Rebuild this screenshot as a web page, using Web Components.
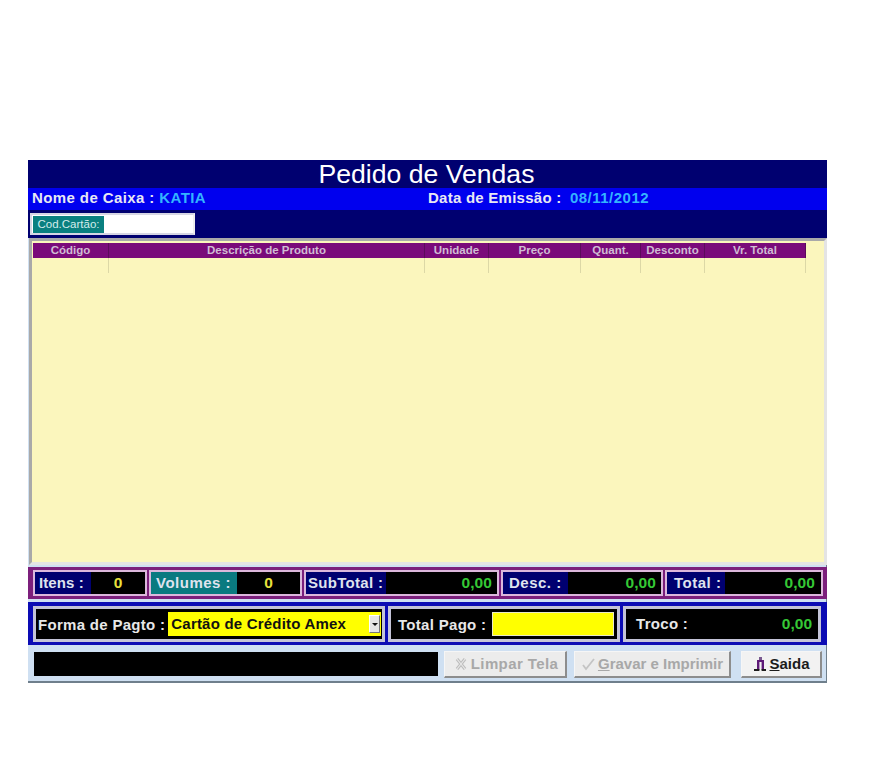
<!DOCTYPE html>
<html>
<head>
<meta charset="utf-8">
<title>Pedido de Vendas</title>
<style>
  html, body { margin: 0; background: #fff; }
  body { padding: 160px 0 0 28px; font-family: "Liberation Sans", Arial, sans-serif; }
</style>
</head>
<body>
<pedido-app></pedido-app>

<script>
class PedidoHeader extends HTMLElement {
  constructor() {
    super();
    this.attachShadow({ mode: 'open' });
    this.shadowRoot.innerHTML = `
      <style>
        :host { display: block; background: #000070; height: 78px; }
        .title { height: 28px; display: flex; justify-content: center; align-items: center;
          color: #fff; font-size: 26.6px; line-height: 28px; padding-right: 2px; box-sizing: border-box; }
        .info { height: 22px; background: #0000ee; display: grid; grid-template-columns: 399px 1fr;
          align-items: center; font-weight: bold; font-size: 15px; line-height: 20px; color: #e8e8f4; letter-spacing: .4px; }
        .info > div { padding-left: 4px; padding-bottom: 2px; white-space: nowrap; }
        .info > div + div { padding-left: 1px; letter-spacing: .25px; }
        .val { color: #33b4ff; letter-spacing: .4px; }
        .date { margin-left: 4px; letter-spacing: .5px; }
        .card { height: 28px; display: flex; align-items: center; padding-left: 2px; }
        .field { display: flex; height: 22px; border: 2px solid #d6d6e4; border-right-color: #eee;
          box-sizing: border-box; width: 165px; background: #fff; padding: 1px 0 0 1px; }
        .lab { width: 71px; background: #0a8080; color: #d4ecec; font-size: 11.5px; display: flex; align-items: center;
          justify-content: center; padding-bottom: 1px; box-sizing: border-box; }
      </style>
      <div class="title">Pedido de Vendas</div>
      <div class="info">
        <div>Nome de Caixa : <span class="val">KATIA</span></div>
        <div>Data de Emissão :&nbsp;<span class="val date">08/11/2012</span></div>
      </div>
      <div class="card">
        <div class="field"><div class="lab">Cod.Cartão:</div></div>
      </div>
    `;
  }
}

class PedidoGrid extends HTMLElement {
  constructor() {
    super();
    this.attachShadow({ mode: 'open' });
    const cols = [
      ['Código', 76], ['Descrição de Produto', 316], ['Unidade', 64], ['Preço', 92],
      ['Quant.', 60], ['Desconto', 64], ['Vr. Total', 101],
    ];
    const head = cols.map(c => `<div class="th" style="width:${c[1]}px">${c[0]}</div>`).join('');
    const row = cols.map(c => `<div class="td" style="width:${c[1]}px"></div>`).join('');
    this.shadowRoot.innerHTML = `
      <style>
        :host { display: block; height: 327px; box-sizing: border-box; background: #fbf6bd;
          border: 3px solid #a9a9a9; border-right-color: #e4e4e4; border-bottom-color: #e4e4e4;
          padding: 2px 0 0 1px; margin-left: 1px; width: 798px; }
        .r { display: flex; }
        .th { height: 15px; box-sizing: border-box; background: #7a0a7a; color: #d0bcd4; font-size: 11.5px; font-weight: bold;
          display: flex; align-items: center; justify-content: center; border-right: 1px solid #5b0a5b; padding-bottom: 1px; }
        .td { height: 15px; box-sizing: border-box; border-right: 1px solid #dcd8a6; }
      </style>
      <div class="r">${head}</div>
      <div class="r">${row}</div>
    `;
  }
}

class PedidoStat extends HTMLElement {
  constructor() {
    super();
    this.attachShadow({ mode: 'open' });
  }
  connectedCallback() {
    const lw = this.getAttribute('label-width');
    const pad = this.getAttribute('label-pad') || '4';
    const spacing = this.getAttribute('label-spacing') || '.5';
    const bg = this.getAttribute('label-bg') || '#000070';
    const color = this.getAttribute('value-color') || '#35c835';
    const align = this.getAttribute('value-align') || 'right';
    const vpad = this.getAttribute('value-pad') || '5';
    this.shadowRoot.innerHTML = `
      <style>
        :host { display: flex; height: 26px; box-sizing: border-box; border: 2px solid #dcb8dc; background: #000;
          font-weight: bold; font-size: 15px; letter-spacing: ${spacing}px; }
        .l { width: ${lw}px; background: ${bg}; color: #dfe3ee; display: flex; align-items: center; padding: 0 0 2px ${pad}px; box-sizing: border-box; white-space: nowrap; }
        .v { flex: 1; color: ${color}; display: flex; align-items: center; justify-content: ${align === 'center' ? 'center' : 'flex-end'};
          padding: 0 ${align === 'center' ? 0 : vpad}px 1px ${align === 'center' ? vpad : 0}px; letter-spacing: .1px; font-size: 15.5px; }
      </style>
      <div class="l">${this.getAttribute('label')}</div>
      <div class="v">${this.getAttribute('value')}</div>
    `;
  }
}

class PedidoPayCell extends HTMLElement {
  constructor() {
    super();
    this.attachShadow({ mode: 'open' });
    this.shadowRoot.innerHTML = `
      <style>
        :host { display: flex; align-items: center; height: 36px; box-sizing: border-box; background: #000;
          border: 3px solid #c4c4d8; color: #e8e8e8; font-weight: bold; font-size: 15px; letter-spacing: .3px; white-space: nowrap; }
      </style>
      <slot></slot>
    `;
  }
}

class PedidoButton extends HTMLElement {
  constructor() {
    super();
    this.attachShadow({ mode: 'open' });
    this.shadowRoot.innerHTML = `
      <style>
        :host { display: flex; align-items: center; justify-content: center; gap: 2px; height: 27px; box-sizing: border-box;
          background: #ececec; border: 1px solid #f6f6f6; border-right: 2px solid #8d8d8d; border-bottom: 2px solid #8d8d8d;
          font-weight: bold; font-size: 15px; color: #a8a8a8; white-space: nowrap; }
        :host([active]) { color: #1c1c1c; background: #f2f2f2; }
      </style>
      <slot name="icon"></slot><slot></slot>
    `;
  }
}

class PedidoApp extends HTMLElement {
  constructor() {
    super();
    this.attachShadow({ mode: 'open' });
    this.shadowRoot.innerHTML = `
      <style>
        :host { display: block; width: 799px; height: 523px; background: #cfe0f2; box-shadow: inset -1px -2px 0 #6f7f8c; }
        .stats { height: 32px; margin-top: 2px; background: #7c1f7c; display: grid; box-sizing: border-box; padding: 3px 3px 3px 5px;
          grid-template-columns: 114px 153px 195px 162px 158px; column-gap: 2px; width: 799px; }
        .pay { height: 43px; background: #0c0cb4; display: grid; box-sizing: border-box; padding: 4px 5px 3px 5px;
          grid-template-columns: 352px 232px 198px; column-gap: 3px; margin-top: 3px; width: 799px; }
        .m { margin-left: 7px; }
        .combo { display: flex; align-items: center; width: 213px; height: 24px; background: #ffff00; color: #111;
          margin-left: 3px; box-sizing: border-box; padding: 0 0 1px 3px; letter-spacing: .2px; position: relative; }
        .arrow { position: absolute; right: 1px; top: 3px; width: 11px; height: 18px; box-sizing: border-box; background: #e6e6e6;
          border: 1px solid #fff; border-right-color: #777; border-bottom-color: #777; display: flex; align-items: center; justify-content: center; }
        .arrow i { display: block; border: 3px solid transparent; border-top: 3px solid #111; border-bottom: 0; }
        .paid { width: 122px; height: 24px; background: #ffff00; border: 1px solid #e8e8c8; box-sizing: border-box; margin-left: 6px; }
        .troco { flex: 1; text-align: right; color: #35c835; padding-right: 6px; letter-spacing: 0; font-size: 15.5px; }
        .bar { height: 38px; display: grid; grid-template-columns: 404px auto auto auto; justify-content: start; align-items: center;
          box-sizing: border-box; padding: 0 5px 0 6px; }
        .bar > :nth-child(2) { margin-left: 6px; width: 123px; letter-spacing: .4px; gap: 3px; padding-left: 2px; box-sizing: border-box; }
        .bar > :nth-child(3) { margin-left: 7px; width: 157px; }
        .bar > :nth-child(4) { margin-left: 10px; width: 81px; }
        .msg { height: 24px; background: #000; }
        svg { display: block; }
      </style>
      <pedido-header></pedido-header>
      <pedido-grid></pedido-grid>
      <div class="stats">
        <pedido-stat label="Itens :" value="0" label-width="56" label-spacing=".1" value-color="#e8e23c" value-align="center" value-pad="0"></pedido-stat>
        <pedido-stat label="Volumes :" value="0" label-width="86" label-pad="5" label-bg="#0a7a80" value-color="#e8e23c" value-align="center" value-pad="0"></pedido-stat>
        <pedido-stat label="SubTotal :" value="0,00" label-width="80" label-pad="2" label-spacing=".3"></pedido-stat>
        <pedido-stat label="Desc. :" value="0,00" label-width="65" label-pad="6"></pedido-stat>
        <pedido-stat label="Total :" value="0,00" label-width="58" label-pad="7" value-pad="6"></pedido-stat>
      </div>
      <div class="pay">
        <pedido-pay-cell>
          <span style="margin-left:2px">Forma de Pagto :</span>
          <span class="combo">Cartão de Crédito Amex<span class="arrow"><i></i></span></span>
        </pedido-pay-cell>
        <pedido-pay-cell>
          <span class="m">Total Pago :</span><span class="paid"></span>
        </pedido-pay-cell>
        <pedido-pay-cell>
          <span class="m" style="margin-left:10px;margin-top:-2px">Troco :</span><span class="troco">0,00</span>
        </pedido-pay-cell>
      </div>
      <div class="bar">
        <div class="msg"></div>
        <pedido-button>
          <svg slot="icon" width="14" height="14" viewBox="0 0 14 14" fill="none"><path d="M3 2l8 10M11 2L3 12" stroke="#bdbdbd" stroke-width="3.2"/><path d="M3 2l8 10M11 2L3 12" stroke="#e8e8e8" stroke-width="1.2"/></svg>
          Limpar Tela
        </pedido-button>
        <pedido-button>
          <svg slot="icon" width="15" height="14" viewBox="0 0 15 14" fill="none"><path d="M2 8l3 4 8-10" stroke="#c4c4c4" stroke-width="1.8"/></svg>
          <span><u>G</u>ravar e Imprimir</span>
        </pedido-button>
        <pedido-button active>
          <svg slot="icon" width="15" height="16" viewBox="0 0 15 16"><path fill="#5e1a78" d="M5 4h7v2H5zM5 6h2.4v8H5zM9.6 6H12v8H9.6z"/><path fill="#7a5a90" d="M7 1h3v3H7z"/><path fill="#1c1c1c" d="M2 13h5.4v2H2zM9.6 13H14v2H9.6z"/></svg>
          <span><u>S</u>aida</span>
        </pedido-button>
      </div>
    `;
  }
}

customElements.define('pedido-header', PedidoHeader);
customElements.define('pedido-grid', PedidoGrid);
customElements.define('pedido-stat', PedidoStat);
customElements.define('pedido-pay-cell', PedidoPayCell);
customElements.define('pedido-button', PedidoButton);
customElements.define('pedido-app', PedidoApp);
</script>
</body>
</html>
